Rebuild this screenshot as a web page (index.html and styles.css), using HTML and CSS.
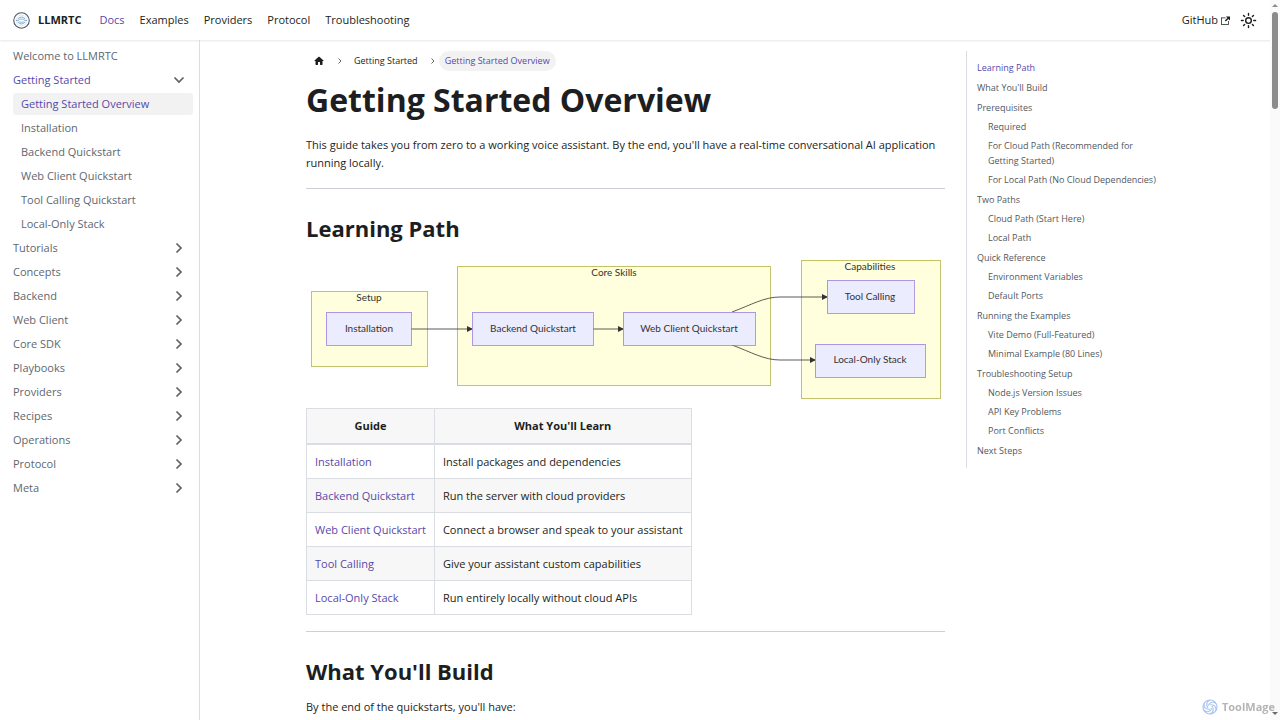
FILE: index.html
```html
<!DOCTYPE html>
<html lang="en">
<head>
<meta charset="utf-8">
<meta name="viewport" content="width=device-width, initial-scale=1">
<title>Getting Started Overview | LLMRTC</title>
<link rel="stylesheet" href="styles.css">
</head>
<body>
<svg class="defs" aria-hidden="true">
  <symbol id="chevron" viewBox="0 0 12 12"><path d="M3.500 1.500 8 6l-4.500 4.500" fill="none" stroke="currentColor" stroke-width="1.700"/></symbol>
  <symbol id="crumb" viewBox="0 0 8 8"><path d="M2.500 1.500 5 4 2.500 6.500" fill="none" stroke="currentColor" stroke-width="1"/></symbol>
</svg>

<nav class="navbar" aria-label="Main">
  <a class="brand" href="#">
    <svg class="logo" viewBox="0 0 16 16" aria-hidden="true">
      <circle cx="8" cy="8" r="7.300" fill="#fff" stroke="#4a5666" stroke-width="1"/>
      <circle cx="8" cy="8" r="5" fill="none" stroke="#bccfe6" stroke-width=".5"/>
      <path d="M4.500 6.500Q8 3 11.500 6.500M4.500 9.500Q8 13 11.500 9.500" fill="none" stroke="#6f9fd6" stroke-width=".8"/>
      <path d="M2.800 8h2.200l1-1.300h4l1 1.300h2.200M5.200 8.400l1.200 1.200h3.200l1.200-1.200" fill="none" stroke="#6a9cc0" stroke-width=".7"/>
    </svg>
    <b>LLMRTC</b>
  </a>
  <a class="nav-link active" href="#">Docs</a>
  <a class="nav-link" href="#">Examples</a>
  <a class="nav-link" href="#">Providers</a>
  <a class="nav-link" href="#">Protocol</a>
  <a class="nav-link" href="#">Troubleshooting</a>
  <a class="nav-link github" href="#">GitHub
    <svg class="external" viewBox="0 0 24 24" aria-hidden="true"><path fill="currentColor" d="M21 13v10H0V4h12v2H2v15h17v-8h2zm3-12H13.012l4.035 4-6.977 7.070 2.828 2.828 6.977-7.070L24 12V1z"/></svg>
  </a>
  <button class="theme" type="button" aria-label="Switch theme">
    <svg viewBox="0 0 24 24" aria-hidden="true"><circle cx="12" cy="12" r="4" fill="none" stroke="currentColor" stroke-width="2"/><path d="M12 2v2.500M12 19.500v2.500M2 12h2.500M19.500 12h2.500M5 5l1.500 1.500M17.500 17.500l1.500 1.500M5 19l1.500-1.500M17.500 6.500l1.500-1.500" stroke="currentColor" stroke-width="2" stroke-linecap="round"/></svg>
  </button>
</nav>

<div class="layout">
  <aside class="sidebar">
    <ul class="menu">
      <li><a href="#">Welcome to LLMRTC</a></li>
      <li>
        <a class="active" href="#">Getting Started<svg class="open" aria-hidden="true"><use href="#chevron"/></svg></a>
        <ul class="submenu">
          <li><a class="active current" href="#">Getting Started Overview</a></li>
          <li><a href="#">Installation</a></li>
          <li><a href="#">Backend Quickstart</a></li>
          <li><a href="#">Web Client Quickstart</a></li>
          <li><a href="#">Tool Calling Quickstart</a></li>
          <li><a href="#">Local-Only Stack</a></li>
        </ul>
      </li>
      <li><a href="#">Tutorials<svg aria-hidden="true"><use href="#chevron"/></svg></a></li>
      <li><a href="#">Concepts<svg aria-hidden="true"><use href="#chevron"/></svg></a></li>
      <li><a href="#">Backend<svg aria-hidden="true"><use href="#chevron"/></svg></a></li>
      <li><a href="#">Web Client<svg aria-hidden="true"><use href="#chevron"/></svg></a></li>
      <li><a href="#">Core SDK<svg aria-hidden="true"><use href="#chevron"/></svg></a></li>
      <li><a href="#">Playbooks<svg aria-hidden="true"><use href="#chevron"/></svg></a></li>
      <li><a href="#">Providers<svg aria-hidden="true"><use href="#chevron"/></svg></a></li>
      <li><a href="#">Recipes<svg aria-hidden="true"><use href="#chevron"/></svg></a></li>
      <li><a href="#">Operations<svg aria-hidden="true"><use href="#chevron"/></svg></a></li>
      <li><a href="#">Protocol<svg aria-hidden="true"><use href="#chevron"/></svg></a></li>
      <li><a href="#">Meta<svg aria-hidden="true"><use href="#chevron"/></svg></a></li>
    </ul>
  </aside>

  <main class="container">
    <article class="doc">
      <nav class="breadcrumbs" aria-label="Breadcrumbs">
        <a href="#" aria-label="Home page"><svg class="home" viewBox="0 0 24 24" aria-hidden="true"><path fill="currentColor" d="M10 19v-5h4v5c0 .55.45 1 1 1h3c.55 0 1-.45 1-1v-7h1.700c.46 0 .68-.57.33-.87L12.670 3.600c-.38-.34-.96-.34-1.340 0l-8.360 7.530c-.34.3-.13.87.33.87H5v7c0 .55.45 1 1 1h3c.55 0 1-.45 1-1z"/></svg></a>
        <svg class="sep" aria-hidden="true"><use href="#crumb"/></svg>
        <a href="#">Getting Started</a>
        <svg class="sep" aria-hidden="true"><use href="#crumb"/></svg>
        <span class="here">Getting Started Overview</span>
      </nav>
      <h1>Getting Started Overview</h1>
      <p>This guide takes you from zero to a working voice assistant. By the end, you'll have a real-time conversational AI application running locally.</p>
      <hr>
      <h2>Learning Path</h2>
      <svg class="diagram" viewBox="0 0 639 140" role="img" aria-label="Learning path">
        <defs><marker id="arrow" viewBox="0 0 6 6" refX="5" refY="3" markerWidth="6" markerHeight="6" markerUnits="userSpaceOnUse" orient="auto"><path d="M0 0 6 3 0 6z" fill="#333"/></marker></defs>
        <g class="group">
          <rect x="5" y="32" width="116" height="75"/>
          <rect x="151" y="7" width="313" height="119"/>
          <rect x="495" y="1" width="139" height="138"/>
        </g>
        <g class="edge">
          <path d="M105 70H166"/>
          <path d="M287 70H317"/>
          <path d="M426 53C445 46 458 38 474 38H521"/>
          <path d="M426 86C445 93 458 101 474 101H509"/>
        </g>
        <g class="node">
          <rect x="20" y="53" width="85" height="33"/>
          <rect x="166" y="53" width="121" height="33"/>
          <rect x="317" y="53" width="132" height="33"/>
          <rect x="521" y="21" width="87" height="33"/>
          <rect x="509" y="85" width="110" height="33"/>
        </g>
        <g class="label">
          <text x="63" y="42">Setup</text>
          <text x="308" y="17">Core Skills</text>
          <text x="564" y="11">Capabilities</text>
          <text x="63" y="73">Installation</text>
          <text x="227" y="73">Backend Quickstart</text>
          <text x="383" y="73">Web Client Quickstart</text>
          <text x="564" y="41">Tool Calling</text>
          <text x="564" y="104">Local-Only Stack</text>
        </g>
      </svg>
      <table>
        <thead><tr><th>Guide</th><th>What You'll Learn</th></tr></thead>
        <tbody>
          <tr><td><a href="#">Installation</a></td><td>Install packages and dependencies</td></tr>
          <tr><td><a href="#">Backend Quickstart</a></td><td>Run the server with cloud providers</td></tr>
          <tr><td><a href="#">Web Client Quickstart</a></td><td>Connect a browser and speak to your assistant</td></tr>
          <tr><td><a href="#">Tool Calling</a></td><td>Give your assistant custom capabilities</td></tr>
          <tr><td><a href="#">Local-Only Stack</a></td><td>Run entirely locally without cloud APIs</td></tr>
        </tbody>
      </table>
      <hr>
      <h2>What You'll Build</h2>
      <p>By the end of the quickstarts, you'll have:</p>
    </article>

    <nav class="toc" aria-label="On this page">
      <ul>
        <li><a class="active" href="#">Learning Path</a></li>
        <li><a href="#">What You'll Build</a></li>
        <li><a href="#">Prerequisites</a>
          <ul>
            <li><a href="#">Required</a></li>
            <li><a href="#">For Cloud Path (Recommended for Getting Started)</a></li>
            <li><a href="#">For Local Path (No Cloud Dependencies)</a></li>
          </ul>
        </li>
        <li><a href="#">Two Paths</a>
          <ul>
            <li><a href="#">Cloud Path (Start Here)</a></li>
            <li><a href="#">Local Path</a></li>
          </ul>
        </li>
        <li><a href="#">Quick Reference</a>
          <ul>
            <li><a href="#">Environment Variables</a></li>
            <li><a href="#">Default Ports</a></li>
          </ul>
        </li>
        <li><a href="#">Running the Examples</a>
          <ul>
            <li><a href="#">Vite Demo (Full-Featured)</a></li>
            <li><a href="#">Minimal Example (80 Lines)</a></li>
          </ul>
        </li>
        <li><a href="#">Troubleshooting Setup</a>
          <ul>
            <li><a href="#">Node.js Version Issues</a></li>
            <li><a href="#">API Key Problems</a></li>
            <li><a href="#">Port Conflicts</a></li>
          </ul>
        </li>
        <li><a href="#">Next Steps</a></li>
      </ul>
    </nav>
  </main>
</div>

<div class="scrollbar" aria-hidden="true"><i class="up"></i><i class="thumb"></i><i class="down"></i></div>
<div class="watermark">
  <svg viewBox="0 0 16 16" aria-hidden="true"><g fill="none" stroke="#a9c4f0" stroke-width="1.200">
    <circle cx="8" cy="8" r="7"/>
    <path id="petal" d="M8 1C4 3 4 6 6 9"/><use href="#petal" transform="rotate(60 8 8)"/><use href="#petal" transform="rotate(120 8 8)"/><use href="#petal" transform="rotate(180 8 8)"/><use href="#petal" transform="rotate(240 8 8)"/><use href="#petal" transform="rotate(300 8 8)"/>
  </g></svg>
  <span>ToolMage</span>
</div>
</body>
</html>
```
FILE: styles.css
```css
:root {
  --primary: #5748ab;
  --text: #1c1e21;
  --muted: #606770;
  --border: #dadde1;
  --hover: #f2f2f2;
}

* { box-sizing: border-box; }

body {
  margin: 0;
  padding-right: 8px;
  background: #fff;
  color: var(--text);
  font: 11px/18px "Open Sans", "Noto Sans", sans-serif;
}

a { color: inherit; text-decoration: none; }
ul { list-style: none; margin: 0; padding: 0; }
.defs { display: none; }

/* Top bar */
.navbar {
  display: flex;
  align-items: center;
  gap: 15px;
  height: 40px;
  padding: 0 15px 0 13px;
  box-shadow: 0 1px 2px rgba(0, 0, 0, .1);
}
.brand { display: flex; align-items: center; gap: 8px; margin-right: 3px; }
.logo { width: 17px; height: 17px; }
.nav-link.active { color: var(--primary); }
.github { display: flex; align-items: center; gap: 3px; margin-left: auto; }
.external { width: 9px; height: 9px; }
.theme {
  display: flex;
  margin-left: -5px;
  padding: 0;
  border: 0;
  background: none;
  color: var(--text);
}
.theme svg { width: 17px; height: 17px; }

/* Sidebar */
.layout { display: flex; min-height: calc(100vh - 40px); }
.sidebar {
  flex: 0 0 200px;
  padding: 5px 6px;
  border-right: 1px solid var(--border);
}
.menu { color: var(--muted); }
.menu a {
  display: flex;
  align-items: center;
  justify-content: space-between;
  height: 22px;
  margin: 0 0 2px;
  padding: 0 8px 0 7px;
  border-radius: 3px;
}
.menu svg { width: 12px; height: 12px; color: #606060; }
.menu svg.open { transform: rotate(90deg); }
.menu .active { color: var(--primary); }
.submenu { padding-left: 7px; }
.submenu a { padding-left: 8px; }
.menu .current { background: var(--hover); }

/* Page content */
.container {
  display: grid;
  grid-template-columns: minmax(0, 3fr) minmax(0, 1fr);
  width: 100%;
  max-width: 908px;
  margin: 0 auto;
  padding: 11px 12px 0;
}
.doc { padding: 0 12px; }
.breadcrumbs { display: flex; align-items: center; height: 20px; font-size: 9px; }
.breadcrumbs a { padding: 0 8px; }
.home { display: block; width: 12px; height: 12px; margin-left: -1px; }
.sep { width: 8px; height: 8px; margin: 0 2px 0 3px; color: #606770; }
.here {
  padding: 1px 6px;
  border-radius: 10px;
  background: var(--hover);
  color: var(--primary);
}
h1 { margin: 6px 0 13px; font-size: 32px; line-height: 46px; }
h2 { margin: 0 0 12px; font-size: 22px; line-height: 30px; }
p { margin: 0 0 16px; }
hr { height: 1px; margin: 16px 0 24px; border: 0; background: #cccfd3; }

.diagram { display: block; width: 100%; margin: 16px 0 9px; }
.diagram rect { shape-rendering: crispEdges; }
.group rect { fill: #ffffde; stroke: #aaaa33; stroke-opacity: .7; }
.node rect { fill: #ececff; stroke: #9370db; stroke-opacity: .7; }
.edge path { fill: none; stroke: #333; stroke-width: 1; stroke-opacity: .8; marker-end: url(#arrow); }
.label { fill: #333; font-family: Lato, "Open Sans", sans-serif; font-size: 10px; text-anchor: middle; }

table { border-collapse: collapse; line-height: 17px; }
th, td { padding: 8px; border: 1px solid var(--border); }
th { border-bottom-width: 2px; line-height: 18px; }
thead tr, tbody tr:nth-child(even) { background: #f7f7f7; }
td a { color: var(--primary); }

/* Table of contents */
.toc {
  align-self: start;
  margin-left: 9px;
  padding: 7px 20px 8px 10px;
  border-left: 1px solid var(--border);
  color: #525860;
  font-size: 9px;
  line-height: 15px;
}
.toc li a { display: block; padding: 2px 0; }
.toc > ul > li + li { margin-top: 1px; }
.toc ul ul { padding-left: 11px; }
.toc .active { color: var(--primary); }

/* Window scrollbar */
.scrollbar { position: fixed; inset: 0 0 0 auto; width: 10px; background: #fafafa; }
.scrollbar i { position: absolute; left: 2px; }
.thumb { top: 12px; width: 6px; height: 97px; border-radius: 3px; background: #8b8b8b; }
.up, .down { border: 3px solid transparent; }
.up { top: 1px; border-bottom-color: #8b8b8b; }
.down { bottom: 2px; border-top-color: #6b6b6b; }

.watermark {
  position: fixed;
  right: 5px;
  bottom: 4px;
  display: flex;
  align-items: center;
  gap: 4px;
  color: #b5b5b5;
  font-weight: bold;
}
.watermark svg { width: 16px; height: 16px; }
```
